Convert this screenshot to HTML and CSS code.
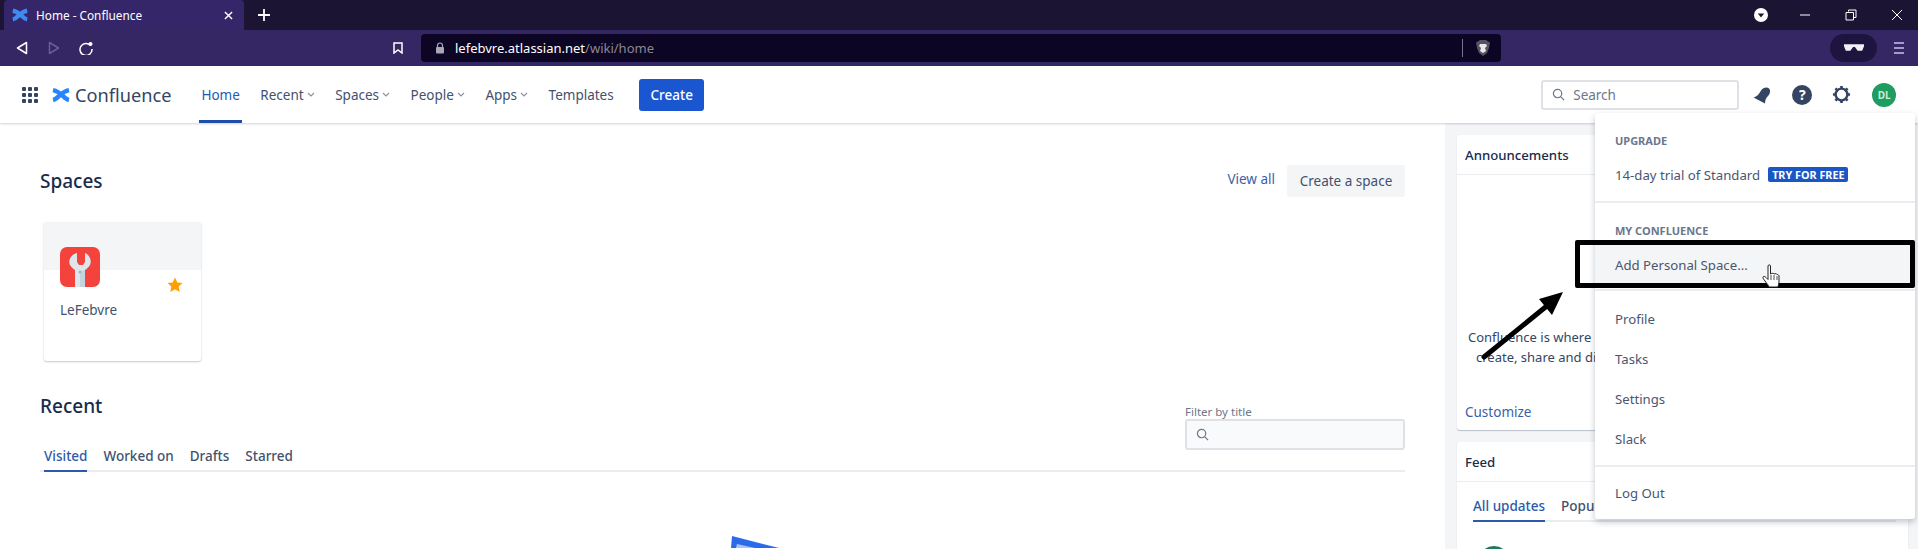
FILE: index.html
```html
<!DOCTYPE html>
<html lang="en">
<head>
    <meta charset="UTF-8">
    <title>Home - Confluence</title>
    <link rel="stylesheet" href="styles.css">
</head>
<body>
    <!-- Browser chrome -->
    <div class="tab-strip">
        <div class="tab">
            <svg class="tab-logo" viewBox="0 0 20 20"><path d="M1 15.500c6-1 8-9 18-11M1 4.500c10 2 12 10 18 11" fill="none" stroke="#3d8bf0" stroke-width="5.500"/></svg>
            <span class="tab-title">Home - Confluence</span>
            <svg class="tab-close" viewBox="0 0 10 10"><path d="M1 1l8 8M9 1l-8 8" stroke="#fff" stroke-width="1.600"/></svg>
        </div>
        <svg class="new-tab" viewBox="0 0 12 12"><path d="M6 0v12M0 6h12" stroke="#fff" stroke-width="1.800"/></svg>
        <div class="window-controls">
            <span class="tab-search"><svg viewBox="0 0 14 14"><circle cx="7" cy="7" r="7" fill="#fff"/><path d="M3.800 5.500h6.400L7 9.600z" fill="#1b1433"/></svg></span>
            <svg class="win-btn" viewBox="0 0 12 12"><path d="M1 6h10" stroke="#fff"/></svg>
            <svg class="win-btn" viewBox="0 0 12 12"><path d="M3.500 2.500V1h7.500v7.500H8.500M1 3.500h7.500V11H1z" fill="none" stroke="#fff"/></svg>
            <svg class="win-btn" viewBox="0 0 12 12"><path d="M1 1l10 10M11 1L1 11" stroke="#fff"/></svg>
        </div>
    </div>
    <div class="toolbar">
        <svg class="nav-icon back" viewBox="0 0 12 14"><path d="M10.500 1.500v11L1.500 7z" fill="none" stroke="#fff" stroke-width="1.500" stroke-linejoin="round"/></svg>
        <svg class="nav-icon forward" viewBox="0 0 12 14"><path d="M1.500 1.500v11l9-5.500z" fill="none" stroke="#6b5c9c" stroke-width="1.500" stroke-linejoin="round"/></svg>
        <svg class="nav-icon reload" viewBox="0 0 14 14"><path d="M11.500 4.500A6 6 0 1 0 13 8" fill="none" stroke="#fff" stroke-width="1.500"/><circle cx="11.500" cy="3" r="2" fill="#fff"/></svg>
        <svg class="bookmark" viewBox="0 0 10 12"><path d="M1 1h8v10L5 8l-4 3z" fill="none" stroke="#fff" stroke-width="1.500"/></svg>
        <div class="url-bar">
            <svg class="lock" viewBox="0 0 10 12"><path d="M2.500 5V3.500a2.500 2.500 0 0 1 5 0V5" fill="none" stroke="#aaa6b8" stroke-width="1.200"/><rect x="1" y="5" width="8" height="6.500" rx="1" fill="#aaa6b8"/></svg>
            <span class="url-host">lefebvre.atlassian.net</span><span class="url-path">/wiki/home</span>
            <span class="url-sep"></span>
            <svg class="brave" viewBox="0 0 14 16"><path d="M2 1.500L4 0h6l2 1.500 2 1-1 5.500-2 5-4 3-4-3-2-5L0 2.500z" fill="#55535f"/><path d="M4 4h6l1 2-2 2 1 3-3 2-3-2 1-3-2-2z" fill="#e8e8ec"/></svg>
        </div>
        <div class="pill">
            <svg viewBox="0 0 22 8"><path d="M0 0h22v2l-2 5h-5l-3-4h-2L7 7H2L0 2z" fill="#f1f0f4"/></svg>
        </div>
        <svg class="menu-icon" viewBox="0 0 10 12"><path d="M0 1h10M0 6h10M0 11h10" stroke="#c9bff0" stroke-width="1.500"/></svg>
    </div>

    <!-- Confluence header -->
    <header class="app-header">
        <svg class="grid-icon" viewBox="0 0 16 16">
            <g fill="#344563">
                <rect x="0" y="0" width="4" height="4" rx="1"/><rect x="6" y="0" width="4" height="4" rx="1"/><rect x="12" y="0" width="4" height="4" rx="1"/>
                <rect x="0" y="6" width="4" height="4" rx="1"/><rect x="6" y="6" width="4" height="4" rx="1"/><rect x="12" y="6" width="4" height="4" rx="1"/>
                <rect x="0" y="12" width="4" height="4" rx="1"/><rect x="6" y="12" width="4" height="4" rx="1"/><rect x="12" y="12" width="4" height="4" rx="1"/>
            </g>
        </svg>
        <svg class="logo" viewBox="0 0 20 18"><path d="M1 14.500c6-1 8-9 18-11M1 3.500c10 2 12 10 18 11" fill="none" stroke="#2684ff" stroke-width="5"/></svg>
        <span class="product">Confluence</span>
        <nav class="app-nav">
            <a class="nav-item active">Home</a>
            <a class="nav-item">Recent<svg class="chev" viewBox="0 0 8 5"><path d="M1 1l3 3 3-3" fill="none" stroke="#8993a4" stroke-width="1.200"/></svg></a>
            <a class="nav-item">Spaces<svg class="chev" viewBox="0 0 8 5"><path d="M1 1l3 3 3-3" fill="none" stroke="#8993a4" stroke-width="1.200"/></svg></a>
            <a class="nav-item">People<svg class="chev" viewBox="0 0 8 5"><path d="M1 1l3 3 3-3" fill="none" stroke="#8993a4" stroke-width="1.200"/></svg></a>
            <a class="nav-item">Apps<svg class="chev" viewBox="0 0 8 5"><path d="M1 1l3 3 3-3" fill="none" stroke="#8993a4" stroke-width="1.200"/></svg></a>
            <a class="nav-item">Templates</a>
        </nav>
        <button class="create-btn">Create</button>
        <div class="search-box">
            <svg class="search-icon" viewBox="0 0 14 14"><circle cx="6" cy="6" r="4.500" fill="none" stroke="#6b778c" stroke-width="1.300"/><path d="M9.500 9.500L13 13" stroke="#6b778c" stroke-width="1.300"/></svg>
            <span>Search</span>
        </div>
        <svg class="head-icon bell" viewBox="0 0 18 18"><path d="M.5 11.500C5 10 6 8 8 4.500c2-3 6-4 8-2s1 5.500-1 7.500c-2 2-3 4-3 7.500z" fill="#344563"/></svg>
        <span class="help">?</span>
        <svg class="head-icon gear" viewBox="0 0 20 20"><circle cx="10" cy="10" r="6.200" fill="none" stroke="#344563" stroke-width="2.600"/><path d="M10 1v3M10 16v3M1 10h3M16 10h3M3.600 3.600l2.100 2.100M14.300 14.300l2.100 2.100M3.600 16.400l2.100-2.100M14.300 5.700l2.100-2.100" stroke="#344563" stroke-width="2.800"/></svg>
        <span class="avatar">DL</span>
    </header>

    <div class="content">
        <main class="main">
            <div class="section-head">
                <h2>Spaces</h2>
                <a class="link view-all">View all</a>
                <button class="subtle-btn">Create a space</button>
            </div>
            <div class="space-card">
                <div class="card-top"></div>
                <svg class="space-icon" viewBox="0 0 40 40">
                    <rect width="40" height="40" rx="7" fill="#f4433c"/>
                    <path d="M17 6C10 8 8 14 10 18c1.500 2.500 3.500 4 5 5v17h10V23c1.500-1 3.500-2.500 5-5 2-4 0-10-5-12v9l-2 3h-4l-2-3z" fill="#dde6ea"/>
                    <path d="M20 24v16h5V23z" fill="#c5d5dd"/>
                    <circle cx="20" cy="25" r="1.500" fill="#a3b8c3"/>
                </svg>
                <svg class="star" viewBox="0 0 16 16"><path d="M8 .5l2.300 4.900 5.200.6-3.800 3.600 1 5.300L8 12.300l-4.700 2.600 1-5.300L.5 6l5.200-.6z" fill="#ffa000"/></svg>
                <span class="space-name">LeFebvre</span>
            </div>
            <div class="recent-head">
                <h2>Recent</h2>
                <div class="filter">
                    <label class="filter-label">Filter by title</label>
                    <div class="filter-input">
                        <svg class="search-icon" viewBox="0 0 14 14"><circle cx="6" cy="6" r="4.500" fill="none" stroke="#6b778c" stroke-width="1.300"/><path d="M9.500 9.500L13 13" stroke="#6b778c" stroke-width="1.300"/></svg>
                    </div>
                </div>
            </div>
            <div class="tabs recent-tabs">
                <a class="tab-link active">Visited</a>
                <a class="tab-link">Worked on</a>
                <a class="tab-link">Drafts</a>
                <a class="tab-link">Starred</a>
            </div>
            <svg class="illustration" viewBox="0 0 48 12"><path d="M1 0l47 12H0z" fill="#2b6bea"/><path d="M6 8l18 4H5z" fill="#a9c6f7"/></svg>
        </main>

        <aside class="side">
            <section class="panel announce">
                <h3 class="panel-title">Announcements</h3>
                <!-- only what shows beside the open menu -->
                <div class="announce-text">
                    <div class="line-one">Confluence is where</div>
                    <div class="line-two">create, share and di</div>
                </div>
                <a class="link customize">Customize</a>
            </section>
            <section class="panel feed">
                <h3 class="panel-title">Feed</h3>
                <div class="tabs feed-tabs">
                    <a class="tab-link active">All updates</a>
                    <a class="tab-link">Popular</a>
                </div>
                <span class="feed-avatar"></span>
            </section>
        </aside>
    </div>

    <!-- Help menu -->
    <div class="dropdown">
        <div class="menu-group">
            <div class="menu-heading">UPGRADE</div>
            <div class="menu-item trial">14-day trial of Standard <span class="badge">TRY FOR FREE</span></div>
        </div>
        <div class="menu-group personal">
            <div class="menu-heading">MY CONFLUENCE</div>
            <div class="menu-item hover">Add Personal Space...</div>
        </div>
        <div class="menu-group links">
            <div class="menu-item">Profile</div>
            <div class="menu-item">Tasks</div>
            <div class="menu-item">Settings</div>
            <div class="menu-item">Slack</div>
        </div>
        <div class="menu-group logout">
            <div class="menu-item">Log Out</div>
        </div>
    </div>

    <!-- Tutorial annotation -->
    <div class="callout-box"></div>
    <svg class="callout-arrow" viewBox="0 0 100 80"><path d="M6 73L70 21" stroke="#000" stroke-width="5" stroke-linecap="round"/><path d="M85 8L61 15l13 16z" fill="#000"/></svg>
    <svg class="cursor" viewBox="0 0 18 26"><path d="M6 2c0-1.500 2.500-1.500 2.500 0v8c2-1 3-1 3.500 0 1.500-.5 2.500-.5 3 .5 1 0 2 .5 2 1.500v6c0 2-1 3-1 5H7c-.5-2-2-3-4-6-1-1.500-2.500-3-2-4 .5-1.200 2-.5 3 .5l2 2z" fill="#fff" stroke="#222" stroke-width="1"/><path d="M9 11v5M12 11v5M15 12v4" stroke="#222" stroke-width=".8"/></svg>
</body>
</html>
```

FILE: styles.css
```css
* {
    box-sizing: border-box;
}

html, body {
    height: 549px;
    overflow: hidden;
}

body {
    position: relative;
    margin: 0;
    font-family: "Noto Sans", "Open Sans", sans-serif;
    font-size: 13.5px;
    color: #42526e;
    background-color: #fff;
}

h2 {
    margin: 0;
    font-size: 19px;
    font-weight: 500;
    color: #172b4d;
}

/* browser chrome */
.tab-strip {
    display: flex;
    align-items: center;
    height: 30px;
    padding-left: 4px;
    background-color: #1b1433;
}

.tab {
    display: flex;
    align-items: center;
    width: 240px;
    height: 30px;
    padding: 0 8px;
    background-color: #35266a;
    border-radius: 4px 4px 0 0;
    color: #fff;
    font-size: 11.8px;
}

.tab-logo {
    width: 16px;
    height: 16px;
    margin-right: 8px;
}

.tab-title {
    flex: 1;
}

.tab-close {
    width: 9px;
    height: 9px;
    margin-right: 3px;
}

.new-tab {
    width: 12px;
    height: 12px;
    margin-left: 14px;
}

.window-controls {
    display: flex;
    align-items: center;
    margin-left: auto;
    padding-right: 15px;
    gap: 34px;
}

.tab-search {
    display: flex;
    margin-right: -3px;
}

.tab-search svg {
    width: 14px;
    height: 14px;
}

.win-btn {
    width: 12px;
    height: 12px;
}

.toolbar {
    display: flex;
    align-items: center;
    height: 36px;
    padding-left: 16px;
    background-color: #352763;
}

.nav-icon {
    width: 12px;
    height: 14px;
}

.forward {
    margin-left: 20px;
}

.reload {
    width: 14px;
    margin-left: 19px;
}

.bookmark {
    width: 10px;
    height: 12px;
    margin-left: 300px;
}

.url-bar {
    display: flex;
    align-items: center;
    width: 1080px;
    height: 28px;
    margin-left: 18px;
    padding: 0 11px 0 14px;
    background-color: #0d0524;
    border-radius: 4px;
    font-size: 13px;
}

.lock {
    width: 10px;
    height: 12px;
    margin-right: 10px;
}

.url-host {
    color: #fff;
}

.url-path {
    color: #8a8794;
}

.url-sep {
    width: 1px;
    height: 18px;
    margin-left: auto;
    margin-right: 13px;
    background-color: #77748a;
}

.brave {
    width: 14px;
    height: 16px;
}

.pill {
    display: flex;
    align-items: center;
    justify-content: center;
    width: 47px;
    height: 28px;
    margin-left: 329px;
    background-color: #1e1440;
    border-radius: 14px;
}

.pill svg {
    width: 20px;
    height: 8px;
}

.menu-icon {
    width: 10px;
    height: 12px;
    margin-left: 17px;
}

/* app header */
.app-header {
    display: flex;
    align-items: center;
    height: 57px;
    padding-left: 22px;
    background-color: #fff;
    box-shadow: 0 1px 2px rgba(9, 30, 66, 0.2);
    position: relative;
}

.grid-icon {
    width: 16px;
    height: 16px;
}

.logo {
    width: 18px;
    height: 16px;
    margin-left: 14px;
}

.product {
    margin-left: 5px;
    font-size: 18.2px;
    color: #344563;
}

.app-nav {
    display: flex;
    align-self: stretch;
    margin-left: 28px;
    gap: 16.5px;
}

.nav-item {
    display: flex;
    align-items: center;
    padding: 0 2px;
    color: #42526e;
    border-bottom: 3px solid transparent;
    border-top: 3px solid transparent;
}

.nav-item.active {
    color: #1d5bb5;
    border-bottom-color: #1d4fa8;
}

.chev {
    width: 8px;
    height: 5px;
    margin-left: 3px;
}

.create-btn {
    width: 65px;
    height: 32px;
    margin-left: 23.5px;
    background-color: #1a56d0;
    border: none;
    border-radius: 3px;
    color: #fff;
    font: inherit;
    font-weight: 500;
}

.search-box {
    display: flex;
    align-items: center;
    width: 198px;
    height: 30px;
    margin-left: 837px;
    padding-left: 9px;
    border: 2px solid #dfe1e6;
    border-radius: 3px;
    color: #6b778c;
}

.search-icon {
    width: 13px;
    height: 13px;
    margin-right: 8px;
}

.head-icon {
    width: 18px;
    height: 18px;
}

.bell {
    margin-left: 14px;
}

.help {
    width: 20px;
    height: 20px;
    margin-left: 21px;
    background-color: #344563;
    border-radius: 50%;
    color: #fff;
    font-size: 14px;
    font-weight: 700;
    line-height: 20px;
    text-align: center;
}

.gear {
    width: 19px;
    height: 19px;
    margin-left: 20px;
}

.avatar {
    width: 24px;
    height: 24px;
    margin-left: 21px;
    background-color: #1f9c5f;
    border-radius: 50%;
    color: #c9ecd9;
    font-size: 10px;
    font-weight: 700;
    line-height: 24px;
    text-align: center;
}

/* page content */
.content {
    display: flex;
    height: 426px;
    overflow: hidden;
}

.main {
    width: 1445px;
    padding: 42px 40px 0;
}

.section-head {
    display: flex;
    align-items: center;
    height: 32px;
}

.section-head h2 {
    margin-right: auto;
}

.link {
    color: #3b5fa8;
}

.view-all {
    margin: 0 12px 4px 0;
}

.subtle-btn {
    width: 118px;
    height: 32px;
    background-color: #f4f5f7;
    border: none;
    border-radius: 3px;
    color: #42526e;
    font: inherit;
}

.space-card {
    position: relative;
    display: flex;
    flex-direction: column;
    width: 157px;
    height: 139px;
    margin: 25px 0 0 4px;
    border-radius: 3px;
    box-shadow: 0 1px 2px rgba(9, 30, 66, 0.25);
}

.card-top {
    height: 48px;
    background-color: #f4f5f7;
}

.space-icon {
    width: 40px;
    height: 40px;
    margin: -23px 0 0 16px;
}

.star {
    position: absolute;
    left: 123px;
    top: 55px;
    width: 16px;
    height: 16px;
}

.space-name {
    margin: 14px 0 0 16px;
}

.recent-head {
    display: flex;
    justify-content: space-between;
    height: 37px;
    margin-top: 44px;
}

.recent-head h2 {
    margin-top: -12px;
}

.filter {
    width: 220px;
}

.filter-label {
    display: block;
    height: 14px;
    font-size: 11.5px;
    line-height: 14px;
    color: #6b778c;
}

.filter-input {
    display: flex;
    align-items: center;
    height: 31px;
    padding-left: 9px;
    background-color: #f9fafb;
    border: 2px solid #dfe1e6;
    border-radius: 3px;
}

.tabs {
    display: flex;
    gap: 16px;
    border-bottom: 2px solid #ebecf0;
}

.tab-link {
    margin-bottom: -2px;
    padding-bottom: 5px;
    border-bottom: 2px solid transparent;
    font-weight: 500;
}

.tab-link.active {
    color: #2d5aa8;
    border-bottom-color: #2d5aa8;
}

.recent-tabs {
    margin-top: 5px;
    padding-left: 4px;
}

.illustration {
    display: block;
    width: 48px;
    height: 12px;
    margin: 64px 0 0 691px;
}

/* right column */
.side {
    flex: 1;
    padding: 12px 10px 0 12px;
    background-color: #f4f5f7;
}

.panel {
    background-color: #fff;
    border-radius: 3px;
    box-shadow: 0 1px 1px rgba(9, 30, 66, 0.25);
}

.panel-title {
    height: 40px;
    margin: 0;
    padding-left: 8px;
    border-bottom: 1px solid #ebecf0;
    color: #172b4d;
    font-size: 13.2px;
    font-weight: 500;
    line-height: 40px;
}

.announce {
    display: flex;
    flex-direction: column;
    height: 295px;
}

.announce-text {
    margin-top: 152px;
    color: #344563;
    font-size: 13px;
    line-height: 20px;
    white-space: nowrap;
}

.line-one {
    margin-left: 11px;
}

.line-two {
    margin-left: 19px;
}

.customize {
    margin: 36px 0 0 8px;
}

.feed {
    height: 140px;
    margin-top: 12px;
}

.feed-tabs {
    margin: 15px 12px 0 16px;
}

.feed-avatar {
    display: block;
    width: 32px;
    height: 32px;
    margin: 24px 0 0 21px;
    background-color: #1f7a5c;
    border-radius: 50%;
}

/* dropdown menu */
.dropdown {
    position: absolute;
    left: 1595px;
    top: 113px;
    width: 320px;
    height: 406px;
    background-color: #fff;
    border-radius: 3px;
    box-shadow: 0 3px 6px rgba(9, 30, 66, 0.25);
    color: #4a5670;
    font-size: 13.2px;
}

.menu-group {
    border-bottom: 2px solid #ebecf0;
}

.menu-heading {
    padding: 20px 20px 0;
    height: 36px;
    color: #6b778c;
    font-size: 11px;
    font-weight: 700;
    line-height: 16px;
}

.menu-item {
    display: flex;
    align-items: center;
    height: 40px;
    padding: 0 20px;
}

.trial {
    height: 33px;
    gap: 8px;
    margin-top: 9px;
    margin-bottom: 10px;
}

.badge {
    height: 15px;
    padding: 0 4px;
    background-color: #1a56c4;
    border-radius: 2px;
    color: #fff;
    font-size: 10.8px;
    font-weight: 700;
    line-height: 15px;
}

.personal .menu-heading {
    height: 42px;
}

.personal .menu-item {
    background-color: #f4f5f7;
}

.personal {
    height: 88px;
}

.links {
    height: 176px;
    padding-top: 8px;
}

.logout {
    border-bottom: none;
    padding-top: 6px;
}

/* annotation */
.callout-box {
    position: absolute;
    left: 1575px;
    top: 240px;
    width: 340px;
    height: 48px;
    border: 5px solid #000;
    border-radius: 2px;
}

.callout-arrow {
    position: absolute;
    left: 1478px;
    top: 284px;
    width: 100px;
    height: 80px;
}

.cursor {
    position: absolute;
    left: 1762px;
    top: 264px;
    width: 18px;
    height: 26px;
}
```
